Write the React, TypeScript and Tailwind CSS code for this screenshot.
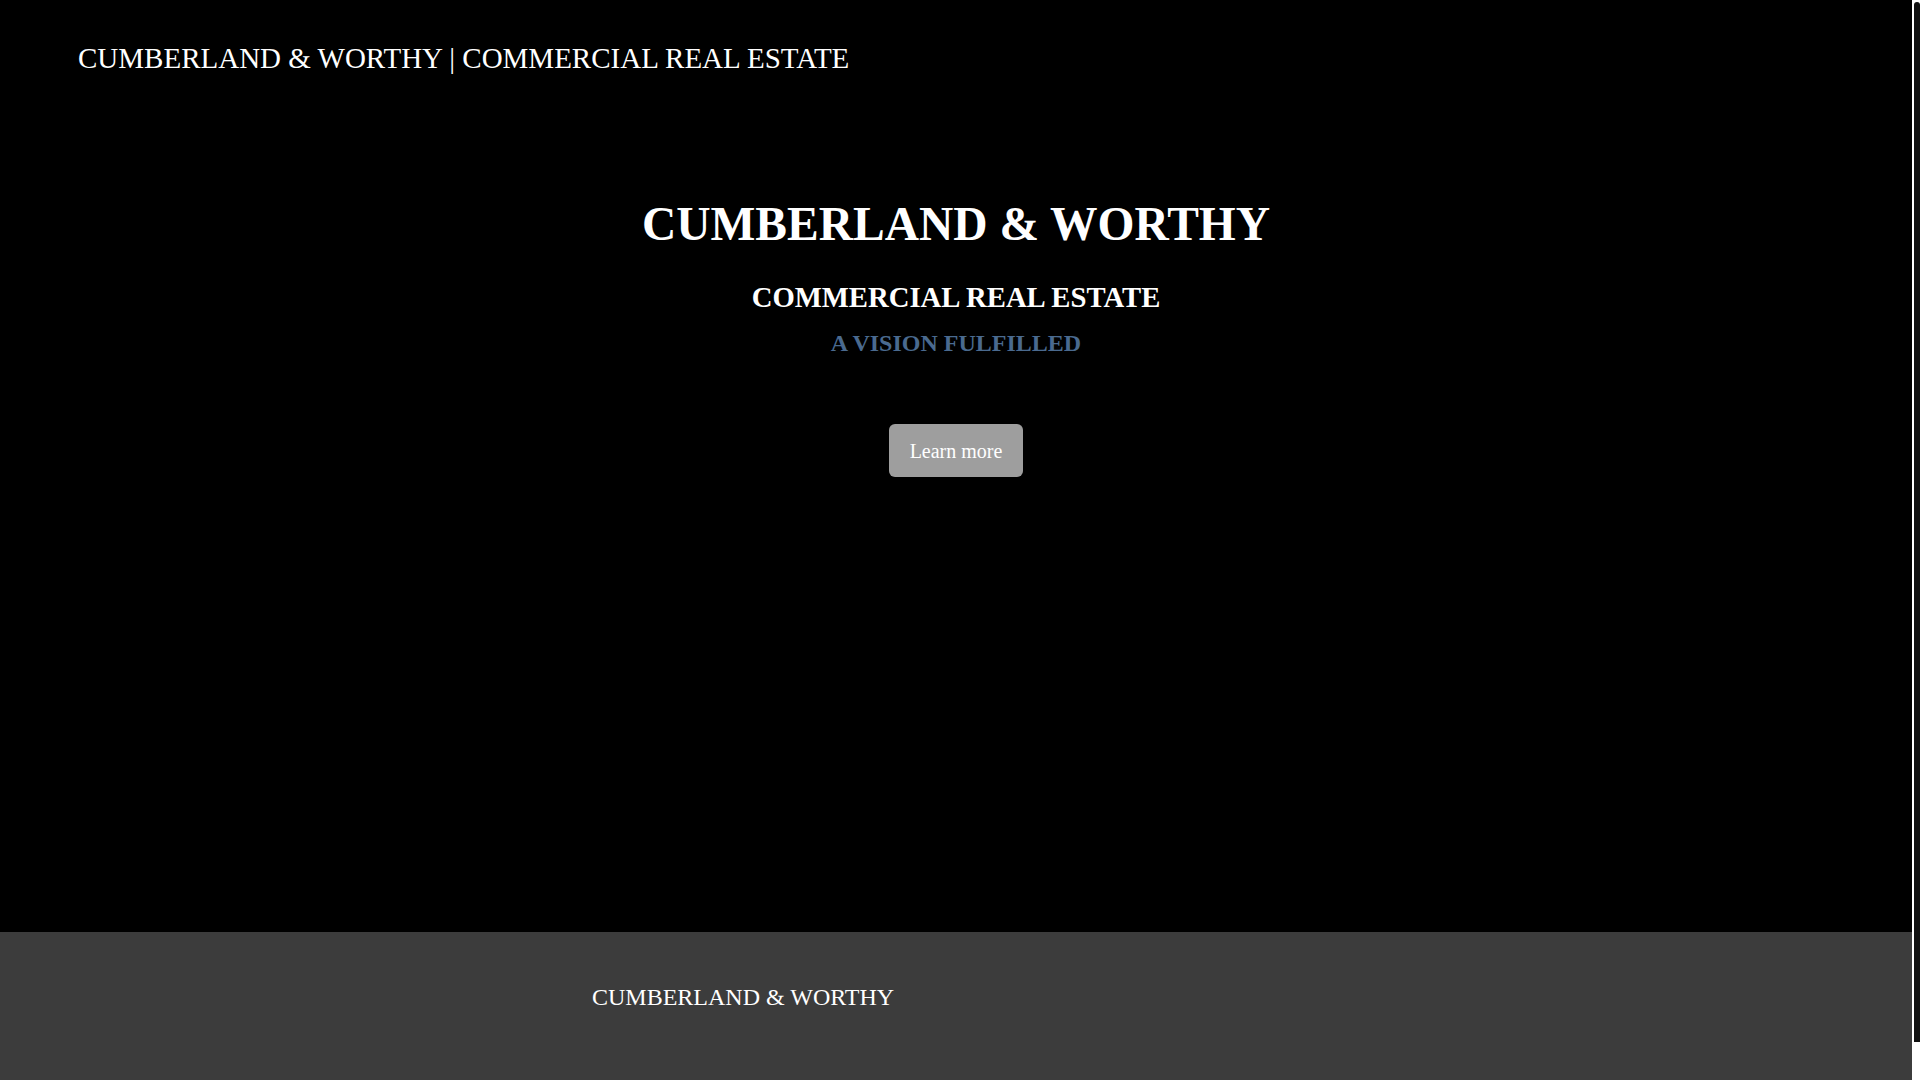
export default function App() {
  return (
    <div className="flex h-screen overflow-hidden bg-white font-['Liberation_Serif','Times_New_Roman',serif]">
      <div className="flex-1">
        {/* Hero */}
        <section className="h-[932px] bg-black text-white">
          <header className="pl-[78px] pt-[44px]">
            <p className="text-[29px] leading-none">
              CUMBERLAND &amp; WORTHY | COMMERCIAL REAL ESTATE
            </p>
          </header>

          <div className="flex flex-col items-center text-center">
            <h1 className="mt-[128px] text-[47.5px] font-bold leading-none">
              CUMBERLAND &amp; WORTHY
            </h1>
            <h2 className="mt-[34px] text-[28.7px] font-bold leading-none">
              COMMERCIAL REAL ESTATE
            </h2>
            <h3 className="mt-[20px] text-[24px] font-bold leading-none text-[#4a6a8f]">
              A VISION FULFILLED
            </h3>
            <button className="mt-[69px] h-[53px] w-[134px] rounded-md bg-[#9e9e9e] text-[20px] leading-none text-white">
              Learn more
            </button>
          </div>
        </section>

        {/* Footer */}
        <footer className="h-[185px] bg-[#3c3c3c] pl-[592px] pt-[53px]">
          <p className="text-[24px] leading-none text-white">CUMBERLAND &amp; WORTHY</p>
        </footer>
      </div>

      {/* scrollbar */}
      <div className="w-2 shrink-0 bg-white pl-[2px] pt-[2px]">
        <div className="h-[1040px] rounded-t-sm bg-[#111]" />
      </div>
    </div>
  );
}
